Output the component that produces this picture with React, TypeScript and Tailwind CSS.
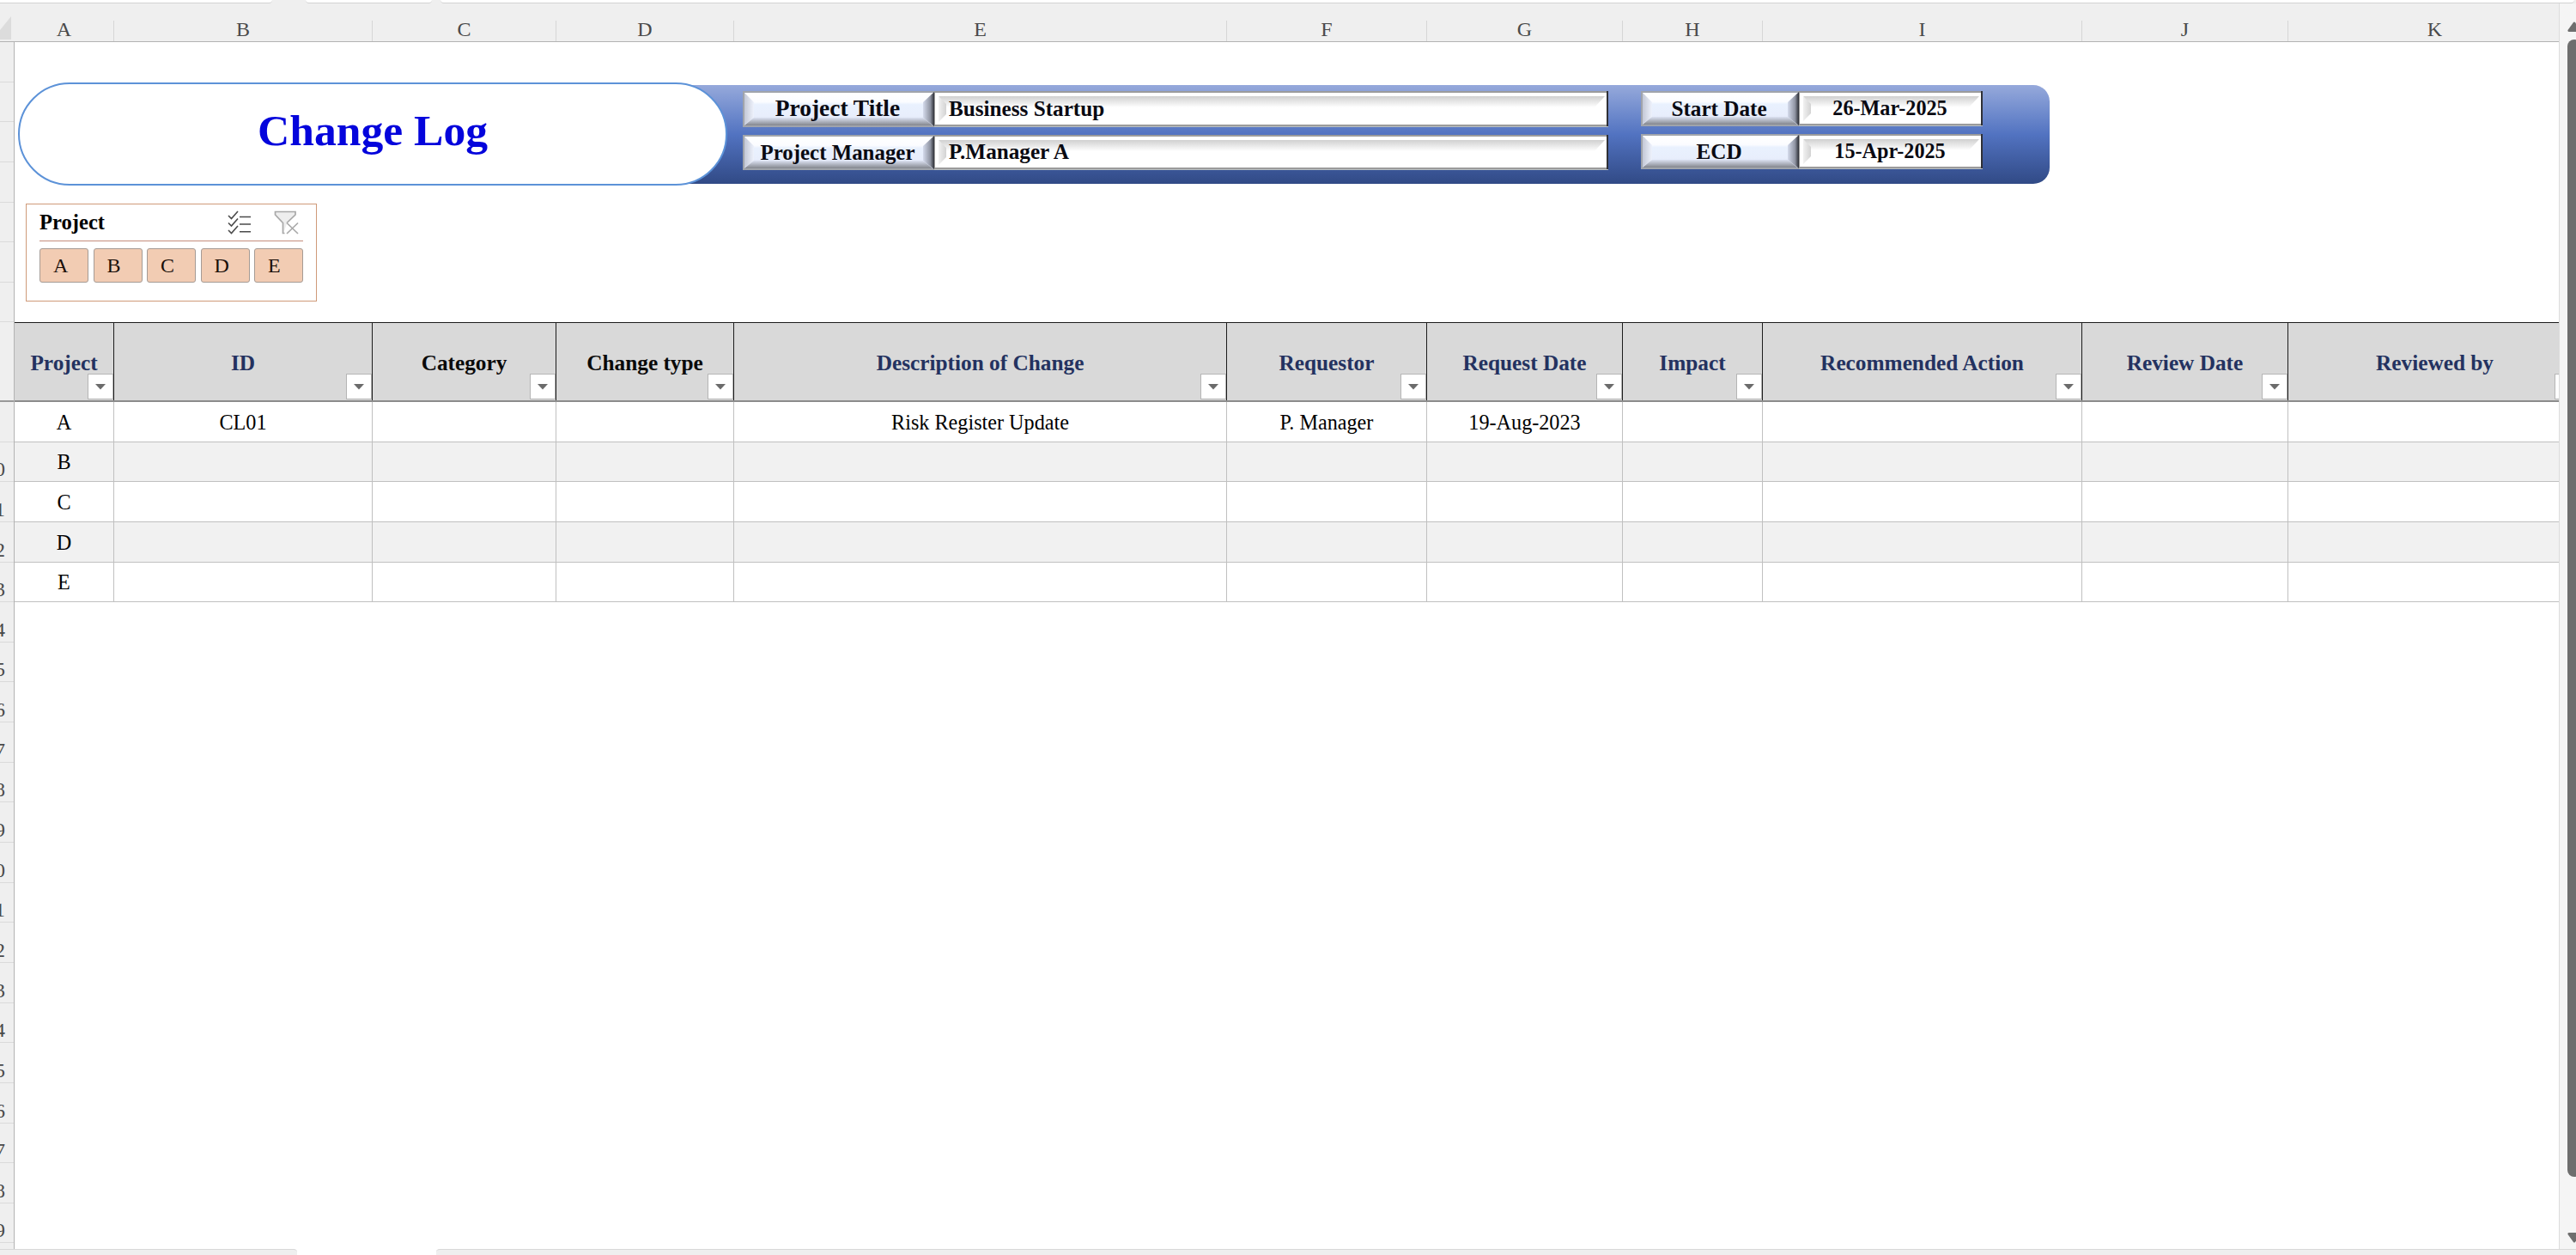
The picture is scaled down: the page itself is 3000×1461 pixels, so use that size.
import type { ReactNode } from "react";

type Column = {
  letter: string;
  title: string;
  width: string;
  dark?: boolean;
};

const columns: Column[] = [
  { letter: "A", title: "Project", width: "w-[116px]" },
  { letter: "B", title: "ID", width: "w-[301px]" },
  { letter: "C", title: "Category", width: "w-[214px]", dark: true },
  { letter: "D", title: "Change type", width: "w-[207px]", dark: true },
  { letter: "E", title: "Description of Change", width: "w-[574px]" },
  { letter: "F", title: "Requestor", width: "w-[233px]" },
  { letter: "G", title: "Request Date", width: "w-[228px]" },
  { letter: "H", title: "Impact", width: "w-[163px]" },
  { letter: "I", title: "Recommended Action", width: "w-[372px]" },
  { letter: "J", title: "Review Date", width: "w-[240px]" },
  { letter: "K", title: "Reviewed by", width: "w-[341px]" },
];

const rows = [
  ["A", "CL01", "", "", "Risk Register Update", "P. Manager", "19-Aug-2023", "", "", "", ""],
  ["B", "", "", "", "", "", "", "", "", "", ""],
  ["C", "", "", "", "", "", "", "", "", "", ""],
  ["D", "", "", "", "", "", "", "", "", "", ""],
  ["E", "", "", "", "", "", "", "", "", "", ""],
];

const rowNumbers = Array.from({ length: 21 }, (_, i) => i + 9);

function Gradients() {
  return (
    <svg className="absolute h-0 w-0" aria-hidden="true">
      <defs>
        <linearGradient id="face" x1="0" y1="0" x2="0" y2="1">
          <stop offset="0" stopColor="#ffffff" />
          <stop offset="0.28" stopColor="#fbfcff" />
          <stop offset="0.36" stopColor="#e9f1fe" />
          <stop offset="0.7" stopColor="#e8eefc" />
          <stop offset="1" stopColor="#d9def0" />
        </linearGradient>
        <linearGradient id="left" x1="0" y1="0" x2="1" y2="0">
          <stop offset="0" stopColor="#c3c8d6" />
          <stop offset="1" stopColor="#eef2fc" />
        </linearGradient>
        <linearGradient id="right" x1="0" y1="0" x2="1" y2="0">
          <stop offset="0" stopColor="#d5dbec" />
          <stop offset="0.65" stopColor="#8f94a2" />
          <stop offset="1" stopColor="#2d2f36" />
        </linearGradient>
        <linearGradient id="bottom" x1="0" y1="0" x2="0" y2="1">
          <stop offset="0" stopColor="#dce2f2" />
          <stop offset="1" stopColor="#83868d" />
        </linearGradient>
        <linearGradient id="shade" x1="0" y1="0" x2="0" y2="1">
          <stop offset="0" stopColor="#d0d0d0" />
          <stop offset="1" stopColor="#ffffff" />
        </linearGradient>
        <linearGradient id="shadeLeft" x1="0" y1="0" x2="1" y2="0">
          <stop offset="0" stopColor="#f1f1f1" />
          <stop offset="1" stopColor="#d3d3d3" />
        </linearGradient>
      </defs>
    </svg>
  );
}

/* Raised plate behind the field names */
function RaisedPlate({ w, h }: { w: number; h: number }) {
  return (
    <svg className="absolute inset-0" width={w} height={h} viewBox={`0 0 ${w} ${h}`}>
      <rect width={w} height={h} fill="#a0a4ab" />
      <rect x="2" y="2" width={w - 2} height={h - 4} fill="url(#face)" />
      <polygon points={`2,2 13,13 13,${h - 11} 2,${h - 3}`} fill="url(#left)" />
      <polygon points={`${w},1 ${w - 13},13 ${w - 13},${h - 11} ${w},${h - 1}`} fill="url(#right)" />
      <polygon points={`2,${h - 2} 13,${h - 11} ${w - 13},${h - 11} ${w - 2},${h - 2}`} fill="url(#bottom)" />
    </svg>
  );
}

/* Sunken plate behind the field values */
function SunkenPlate({ w, h }: { w: number; h: number }) {
  return (
    <svg className="absolute inset-0" width={w} height={h} viewBox={`0 0 ${w} ${h}`}>
      <rect width={w} height={h} fill="#9b9b9b" />
      <rect x="1" y="2" width={w - 3} height={h - 5} fill="#ffffff" />
      <polygon points={`5,6 ${w - 4},6 ${w - 16},19 14,19`} fill="url(#shade)" />
      <polygon points={`5,6 14,15 14,${h - 15} 5,${h - 6}`} fill="url(#shadeLeft)" />
      <rect x={w - 2} width="2" height={h} fill="#2f3036" />
      <rect y={h - 1} width={w} height="1" fill="#b9c0c4" />
    </svg>
  );
}

type FieldProps = {
  label: ReactNode;
  value: string;
  labelW: number;
  valueW: number;
  h: number;
  wide?: boolean;
};

function Field({ label, value, labelW, valueW, h, wide }: FieldProps) {
  return (
    <div className="flex text-[25.2px] font-bold leading-none text-[#0a0a12]" style={{ height: h }}>
      <div className="relative flex items-center justify-center pr-[2px]" style={{ width: labelW }}>
        <RaisedPlate w={labelW} h={h} />
        <span className="relative">{label}</span>
      </div>
      <div
        className={
          wide
            ? "relative flex items-center pb-px pl-[17px]"
            : "relative flex items-center justify-center pr-[2px] text-[24.2px]"
        }
        style={{ width: valueW }}
      >
        <SunkenPlate w={valueW} h={h} />
        <span className="relative">{value}</span>
      </div>
    </div>
  );
}

function Banner() {
  return (
    <div className="flex items-start pl-1">
      <div className="relative z-10 flex h-[120px] w-[826px] items-center justify-center rounded-full border-2 border-[#5c92d8] bg-white">
        <h1 className="pb-2 text-[51.6px] font-bold leading-none text-[#0404dc]">Change Log</h1>
      </div>
      <div className="-ml-[67px] mt-[3px] flex h-[115px] w-[1607px] rounded-r-[19px] bg-linear-to-b from-[#96a9db] via-[#5273c1] to-[#314a86] pl-[85px] pt-[7px]">
        <div className="flex flex-col gap-[9px]">
          <Field
            label={<span className="text-[27.4px]">Project Title</span>}
            value="Business Startup"
            labelW={223}
            valueW={785}
            h={42}
            wide
          />
          <Field
            label={<span className="text-[24.9px]">Project Manager</span>}
            value="P.Manager A"
            labelW={223}
            valueW={785}
            h={41}
            wide
          />
        </div>
        <div className="ml-[38px] flex flex-col gap-[9px]">
          <Field label="Start Date" value="26-Mar-2025" labelW={184} valueW={214} h={41} />
          <Field label="ECD" value="15-Apr-2025" labelW={184} valueW={214} h={41} />
        </div>
      </div>
    </div>
  );
}

function MultiSelectIcon() {
  return (
    <svg width="28" height="28" viewBox="0 0 28 28" fill="none" stroke="#4b4b4b" strokeWidth="1.6">
      <path d="M1 6l3.5 3.5L12 1M1 14.500l3.500 3.500L12 9.500M1 23l3.500 3.500L12 18" />
      <path d="M14 7.500h13M14 16h13M14 24.700h13" />
    </svg>
  );
}

function ClearFilterIcon() {
  return (
    <svg width="30" height="28" viewBox="0 0 30 28" fill="none" stroke="#a9a9a9" strokeWidth="1.7">
      <path d="M15 15.500L25 5.500V1.500H1.500v4L11 15.500v11" fill="#eeeeee" stroke="none" />
      <path d="M15 14.500L25 5V1.500H1.500V5L10.500 14.500V26.500H12.500" />
      <path d="M15 14.500L28 27M28 14.500L15 27" />
    </svg>
  );
}

function Slicer() {
  return (
    <div className="ml-[13px] mt-[21px] h-[114px] w-[339px] border border-[#cf9a79] px-[15px]">
      <div className="flex h-[43px] items-center justify-between border-b border-[#c48d7c]">
        <span className="text-[24.6px] font-bold leading-none text-black">Project</span>
        <div className="flex gap-[26px] pr-[4px]">
          <MultiSelectIcon />
          <ClearFilterIcon />
        </div>
      </div>
      <div className="mt-2 flex gap-[5.500px]">
        {["A", "B", "C", "D", "E"].map((item) => (
          <div
            key={item}
            className="flex h-10 w-[57px] items-center rounded-[3px] border border-[#a59b95] bg-[#f2ccb3] pl-[15px] text-2xl leading-none text-[#1a0f0a]"
          >
            {item}
          </div>
        ))}
      </div>
    </div>
  );
}

function FilterButton() {
  return (
    <div className="absolute bottom-px right-0 flex h-[30px] w-[30px] items-center justify-center border border-[#b5b5b5] bg-white">
      <svg width="12" height="7" viewBox="0 0 12 7">
        <path d="M0 0h12L6 6.500z" fill="#6b6b6b" />
      </svg>
    </div>
  );
}

function ColumnLetters() {
  return (
    <div className="flex h-[45px] shrink-0 border-b border-[#b3b3b3]">
      <div className="flex w-[17px] shrink-0 items-end pb-[2px]">
        <svg width="13" height="27" viewBox="0 0 13 27">
          <path d="M13 0v27H0V16z" fill="#dcdcdc" />
        </svg>
      </div>
      {columns.map((col, i) => (
        <div key={col.letter} className={`${col.width} flex shrink-0 items-end`}>
          <span className="flex-1 text-center text-2xl leading-[28px] text-[#4a4a4a]">{col.letter}</span>
          {i < columns.length - 1 && <span className="h-6 w-px bg-[#d6d6d6]" />}
        </div>
      ))}
    </div>
  );
}

function RowGutter() {
  return (
    <div className="w-[17px] shrink-0 overflow-hidden border-r border-[#b3b3b3] bg-[#efefef]">
      {Array.from({ length: 7 }, (_, i) => (
        <div key={i} className="h-[46.650px] border-b border-[#dadada]" />
      ))}
      <div className="h-[92.500px] border-b-2 border-[#999999]" />
      {rowNumbers.map((n) => (
        <div
          key={n}
          className="flex h-[46.650px] w-full items-end justify-end border-b border-[#dadada] pb-px pr-[10px] text-2xl leading-[26px] text-[#4a4a4a]"
        >
          {n > 9 ? n : ""}
        </div>
      ))}
    </div>
  );
}

function Table() {
  return (
    <div className="text-[24.2px]">
      <div className="flex h-[93px] border-b-2 border-t border-b-[#8c8c8c] border-t-[#1c1c1c] bg-[#d9d9d9]">
        {columns.map((col, i) => (
          <div
            key={col.letter}
            className={`${col.width} relative flex shrink-0 items-center justify-center pt-[3px] ${
              i < columns.length - 1 ? "border-r border-[#1c1c1c]" : ""
            }`}
          >
            <span
              className={`text-[25.3px] font-bold leading-none ${col.dark ? "text-[#0a0a0a]" : "text-[#243260]"}`}
            >
              {col.title}
            </span>
            {i < columns.length - 1 && <FilterButton />}
            {i === columns.length - 1 && (
              <div className="absolute bottom-px right-[26px] h-[30px] w-[5px] border border-r-0 border-[#b5b5b5] bg-white" />
            )}
          </div>
        ))}
      </div>
      {rows.map((row, r) => (
        <div key={row[0]} className={r % 2 ? "flex h-[46.650px] bg-[#f1f1f1]" : "flex h-[46.650px] bg-white"}>
          {row.map((cell, c) => (
            <div
              key={c}
              className={`${columns[c].width} flex shrink-0 items-center justify-center border-b border-r border-[#c0c0c0] pt-[2px] leading-none text-black`}
            >
              {cell}
            </div>
          ))}
        </div>
      ))}
    </div>
  );
}

function ScrollBar() {
  return (
    <div className="flex w-5 shrink-0 flex-col overflow-hidden border-l border-[#dcdcdc] bg-[#f5f5f5] pl-[9px]">
      <svg className="mt-[21px] shrink-0" width="16" height="12" viewBox="0 0 16 12">
        <path d="M7 1L0.500 10Q0 12 2 12H14Q16 12 15 10L9 1Q8 0 7 1z" fill="#6e6e6e" />
      </svg>
      <div className="mt-[9px] h-[1324px] w-4 shrink-0 rounded-lg bg-[#6e6e6e]" />
      <svg className="mt-[65px] shrink-0" width="16" height="12" viewBox="0 0 16 12">
        <path d="M7 11L0.500 2Q0 0 2 0H14Q16 0 15 2L9 11Q8 12 7 11z" fill="#6e6e6e" />
      </svg>
    </div>
  );
}

export default function App() {
  return (
    <div className="flex h-[1461px] w-[3000px] flex-col overflow-hidden bg-[#efefef] font-['Liberation_Serif',serif]">
      <Gradients />
      {/* Bottom edges of the ribbon panels */}
      <div className="flex h-1 shrink-0">
        <div className="w-[317px] shrink-0 rounded-br border-b border-[#d2d2d2] bg-white" />
        <div className="ml-[39px] w-[147px] shrink-0 rounded-b border-b border-[#d2d2d2] bg-white" />
        <div className="ml-[10px] mr-[2px] flex-1 rounded-b border-b border-[#d2d2d2] bg-white" />
      </div>
      <div className="flex h-[1450px] shrink-0">
        <div className="flex w-[2980px] shrink-0 flex-col overflow-hidden">
          <ColumnLetters />
          <div className="flex flex-1 overflow-hidden">
            <RowGutter />
            <div className="flex-1 overflow-hidden bg-white">
              <div className="h-[326px] pt-[47px]">
                <Banner />
                <Slicer />
              </div>
              <Table />
            </div>
          </div>
        </div>
        <ScrollBar />
      </div>
      {/* Sheet tabs */}
      <div className="flex h-[7px] shrink-0 bg-white">
        <div className="w-[346px] shrink-0 rounded-tr border-t border-[#d8d8d8] bg-[#efefef]" />
        <div className="ml-[162px] flex-1 rounded-tl border-t border-[#d8d8d8] bg-[#efefef]" />
      </div>
    </div>
  );
}
